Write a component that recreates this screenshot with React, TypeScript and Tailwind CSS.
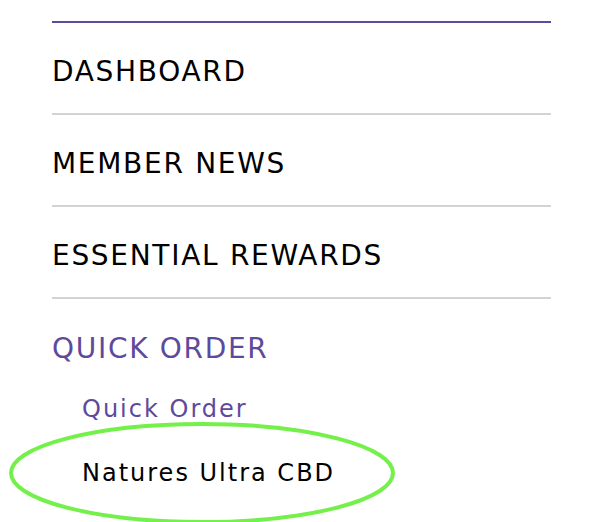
const font = { fontFamily: '"DejaVu Sans", "Noto Sans", sans-serif' };

const mainItems = ["DASHBOARD", "MEMBER NEWS", "ESSENTIAL REWARDS"];

export default function App() {
  return (
    <div className="relative h-[522px] w-[610px] overflow-hidden bg-white" style={font}>
      <nav className="ml-[52px] w-[499px] pt-[21px]">
        <div className="h-[2px] bg-[#5e4a9c]" />
        <ul>
          {mainItems.map((label) => (
            <li
              key={label}
              className="flex h-[92px] items-center border-b-2 border-[#d3d3d3] pt-[8px] text-[28px] tracking-[1.7px] text-black"
            >
              {label}
            </li>
          ))}
          <li className="flex h-[92px] items-center pt-[8px] text-[28px] tracking-[1.7px] text-[#5e4a9c]">
            QUICK ORDER
          </li>
        </ul>
        <div className="pl-[30px] text-[24px] tracking-[2px]">
          <div className="text-[#5e4a9c]">Quick Order</div>
          <div className="relative mt-[28px] text-black">
            Natures Ultra CBD
            <svg
              className="absolute left-[-76px] top-[-34px]"
              width="394"
              height="108"
              viewBox="0 0 394 108"
            >
              <ellipse cx="196" cy="52" rx="191" ry="49" fill="none" stroke="#74f04a" strokeWidth="4" />
            </svg>
          </div>
        </div>
      </nav>
    </div>
  );
}
